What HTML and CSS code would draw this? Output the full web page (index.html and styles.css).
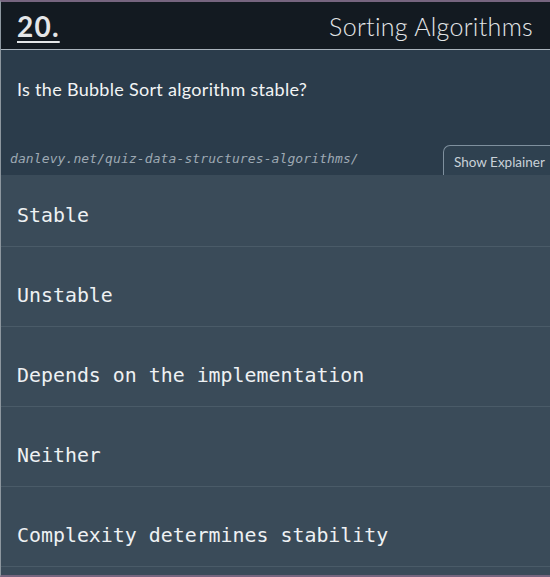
FILE: index.html
```html
<!DOCTYPE html>
<html>
<head>
<meta charset="utf-8">
<link rel="stylesheet" href="styles.css">
</head>
<body>
<div class="frame">
  <header class="top">
    <span class="num">20.</span>
    <span class="topic">Sorting Algorithms</span>
  </header>
  <section class="question">
    <p class="qtext">Is the Bubble Sort algorithm stable?</p>
    <div class="meta">
      <span class="url">danlevy.net/quiz-data-structures-algorithms/</span>
      <button class="tab">Show Explainer</button>
    </div>
  </section>
  <ul class="answers">
    <li class="answer first">Stable</li>
    <li class="answer">Unstable</li>
    <li class="answer">Depends on the implementation</li>
    <li class="answer">Neither</li>
    <li class="answer">Complexity determines stability</li>
  </ul>
</div>
</body>
</html>
```
FILE: styles.css
```css
html, body {
  margin: 0;
  padding: 0;
  background: #3a4b59;
}
.frame {
  width: 550px;
  height: 577px;
  box-sizing: border-box;
  border-top: 2px solid #76657f;
  border-bottom: 2px solid #76657f;
  border-left: 1px solid #8d979f;
  background: #3a4b59;
  display: flex;
  flex-direction: column;
  overflow: hidden;
}
.top {
  height: 48px;
  flex: none;
  box-sizing: border-box;
  background: #131a21;
  border-bottom: 1px solid #a9b3bc;
  display: flex;
  align-items: center;
  justify-content: space-between;
  padding: 0 17px 0 16px;
  font-family: "Lato", "Open Sans", sans-serif;
  color: #e4e6e8;
}
.num {
  font-size: 28px;
  font-weight: 700;
  text-decoration: underline;
  text-underline-offset: 4px;
  text-decoration-thickness: 2px;
  letter-spacing: 1.2px;
}
.topic {
  font-size: 25px;
  font-weight: 300;
  letter-spacing: 0.3px;
}
.question {
  flex: none;
  height: 125px;
  background: #2b3c4b;
  display: flex;
  flex-direction: column;
  justify-content: space-between;
}
.qtext {
  margin: 0;
  padding: 28px 0 0 16px;
  font-family: "Lato", "Open Sans", sans-serif;
  font-size: 18px;
  letter-spacing: 0.3px;
  color: #f2f4f5;
  line-height: 22px;
}
.meta {
  display: flex;
  align-items: flex-end;
  justify-content: space-between;
}
.url {
  font-family: "DejaVu Sans Mono", monospace;
  font-style: italic;
  font-size: 13px;
  letter-spacing: 0.1px;
  color: #9ea9b3;
  padding: 0 0 9px 9px;
}
.tab {
  font-family: "Lato", "Open Sans", sans-serif;
  font-size: 13.5px;
  color: #c9d1d8;
  background: #2f4150;
  border: 1px solid #7f909e;
  border-bottom: none;
  border-right: none;
  border-radius: 7px 0 0 0;
  height: 30px;
  padding: 2px 4px 0 10px;
  width: 107px;
  text-align: left;
}
.answers {
  list-style: none;
  margin: 0;
  padding: 0;
  flex: 1;
}
.answer {
  display: flex;
  align-items: center;
  padding: 17px 0 0 16px;
  box-sizing: border-box;
  height: 80px;
  border-bottom: 1px solid #4a5b68;
  font-family: "DejaVu Sans Mono", monospace;
  font-size: 19.9px;
  color: #eef1f3;
}
.answer.first {
  height: 72px;
  padding-top: 9px;
}
```
